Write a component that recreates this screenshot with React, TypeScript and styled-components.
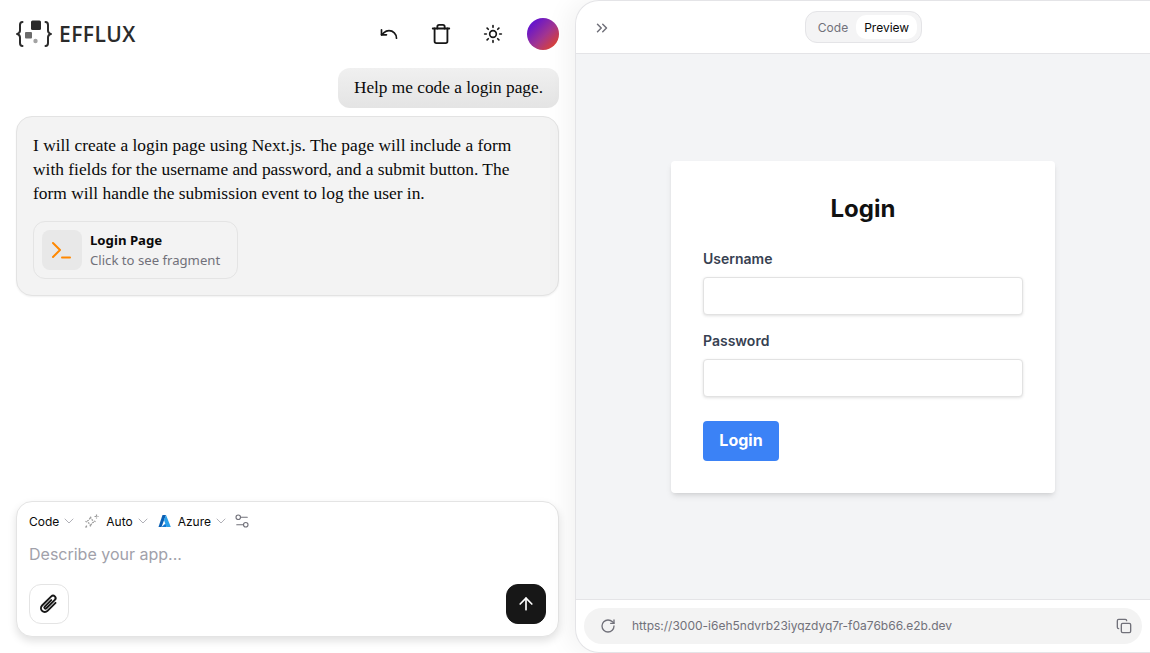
import React from "react";
import styled, { createGlobalStyle } from "styled-components";
import { ArrowUp, ChevronDown, ChevronsRight, Copy, RotateCw, Settings2, Sun, Trash, Undo } from "lucide-react";

const GlobalStyle = createGlobalStyle`
  html, body, #root { margin: 0; height: 100%; }
  body { background: #fff; font-family: Inter, "Liberation Sans", sans-serif; overflow: hidden; }
  * { box-sizing: border-box; }
`;

const Page = styled.div`
  display: flex;
  width: 1150px;
  height: 653px;
  background: #fff;
`;

const ChatColumn = styled.div`
  width: 575px;
  flex: none;
  display: flex;
  flex-direction: column;
  padding: 0 16px 16px;
`;

const TopBar = styled.header`
  height: 68px;
  flex: none;
  display: flex;
  align-items: center;
  justify-content: space-between;
`;

const Brand = styled.div`
  display: flex;
  align-items: center;
  gap: 7px;
`;

const BrandName = styled.span`
  font-family: "Open Sans", sans-serif;
  font-size: 21px;
  font-weight: 600;
  letter-spacing: 0.45px;
  color: #2b2b2b;
`;

const TopActions = styled.div`
  display: flex;
  align-items: center;
`;

const IconSlot = styled.span`
  width: 52px;
  display: flex;
  justify-content: center;
  color: #171717;
`;

const Avatar = styled.div`
  width: 32px;
  height: 32px;
  margin-left: 8px;
  border-radius: 50%;
  background: linear-gradient(135deg, #5b0fd6 10%, #a23590 55%, #e8451f 95%);
`;

const Messages = styled.div`
  flex: 1;
  display: flex;
  flex-direction: column;
  gap: 8px;
`;

const UserBubble = styled.div`
  align-self: flex-end;
  height: 40px;
  padding: 0 16px;
  display: flex;
  align-items: center;
  border-radius: 12px;
  background: linear-gradient(180deg, #f0f0f0, #e4e4e4);
  font-family: "Liberation Serif", serif;
  font-size: 17.3px;
  color: #0a0a0a;
`;

const AssistantBubble = styled.div`
  height: 180px;
  padding: 16px;
  border: 1px solid #e3e3e3;
  border-radius: 16px;
  background: #f3f3f3;
  box-shadow: 0 1px 2px rgba(0, 0, 0, 0.06);
`;

const AssistantText = styled.p`
  margin: 0 0 16px;
  font-family: "Liberation Serif", serif;
  font-size: 17.4px;
  line-height: 24px;
  color: #0a0a0a;
`;

const Fragment = styled.div`
  width: 205px;
  height: 58px;
  display: flex;
  align-items: center;
  gap: 8px;
  padding-left: 8px;
  border: 1px solid #e4e4e4;
  border-radius: 12px;
`;

const FragmentIcon = styled.div`
  width: 40px;
  height: 40px;
  display: flex;
  align-items: center;
  justify-content: center;
  border-radius: 8px;
  background: #e8e8e8;
`;

const FragmentTitle = styled.div`
  font-family: "Noto Sans", sans-serif;
  font-size: 13.2px;
  font-weight: 700;
  line-height: 19px;
  color: #0a0a0a;
`;

const FragmentHint = styled.div`
  font-family: "Noto Sans", sans-serif;
  font-size: 13.15px;
  line-height: 20px;
  color: #71717a;
`;

const Composer = styled.div`
  height: 136px;
  flex: none;
  padding: 10px 12px 12px;
  display: flex;
  flex-direction: column;
  border: 1px solid #e4e4e4;
  border-radius: 16px;
  background: #fff;
  box-shadow: 0 4px 8px rgba(0, 0, 0, 0.12);
`;

const PickerRow = styled.div`
  display: flex;
  align-items: center;
  gap: 7px;
  height: 18px;
  font-size: 12px;
  color: #0a0a0a;
`;

const Picker = styled.span`
  display: inline-flex;
  align-items: center;
  gap: 2px;
`;

const PickerChevron = styled(ChevronDown).attrs({ size: 16, strokeWidth: 1.25, color: "#a1a1aa" })``;

const TuneIcon = styled(Settings2).attrs({ size: 18, strokeWidth: 1.5, color: "#71717a" })`
  margin-left: -3px;
`;

const Placeholder = styled.div`
  margin-top: 12px;
  height: 24px;
  font-size: 16px;
  line-height: 24px;
  color: #a1a1aa;
`;

const ComposerActions = styled.div`
  margin-top: auto;
  display: flex;
  justify-content: space-between;
`;

const SquareButton = styled.button<{ $dark?: boolean }>`
  width: 40px;
  height: 40px;
  padding: 0;
  display: flex;
  align-items: center;
  justify-content: center;
  border-radius: 12px;
  border: 1px solid ${(p) => (p.$dark ? "#171717" : "#e4e4e4")};
  background: ${(p) => (p.$dark ? "#171717" : "#fff")};
  color: ${(p) => (p.$dark ? "#fff" : "#171717")};
`;

const PreviewPanel = styled.section`
  flex: 1;
  display: flex;
  flex-direction: column;
  border: 1px solid #e4e4e7;
  border-right: 0;
  border-radius: 24px 0 0 24px;
  overflow: hidden;
  background: #fff;
  box-shadow: -8px 0 24px rgba(0, 0, 0, 0.05);
`;

const PreviewHeader = styled.div`
  height: 53px;
  flex: none;
  display: grid;
  grid-template-columns: 1fr auto 1fr;
  align-items: start;
  padding: 10px 16px 0 17px;
  border-bottom: 1px solid #e4e4e7;
`;

const Collapse = styled.span`
  display: flex;
  color: #71717a;
  margin-top: 8px;
`;

const Tabs = styled.div`
  height: 32px;
  padding: 3px 4px;
  display: flex;
  border: 1px solid #e4e4e7;
  border-radius: 12px;
  background: #f4f4f5;
`;

const Tab = styled.span<{ $active?: boolean }>`
  display: flex;
  align-items: center;
  padding: 0 8px;
  border-radius: 10px;
  font-size: 12px;
  background: ${(p) => (p.$active ? "#fff" : "transparent")};
  color: ${(p) => (p.$active ? "#0a0a0a" : "#71717a")};
`;

const PreviewBody = styled.div`
  flex: 1;
  display: flex;
  align-items: center;
  justify-content: center;
  background: #f3f4f6;
`;

const LoginCard = styled.form`
  width: 384px;
  height: 332px;
  padding: 32px;
  border-radius: 4px;
  background: #fff;
  box-shadow: 0 4px 6px -1px rgba(0, 0, 0, 0.1), 0 2px 4px -2px rgba(0, 0, 0, 0.1);
`;

const LoginTitle = styled.h1`
  margin: 0 0 24px;
  text-align: center;
  font-family: Inter, sans-serif;
  font-size: 24px;
  line-height: 32px;
  font-weight: 700;
  color: #111;
`;

const Field = styled.div`
  margin-bottom: 16px;
`;

const FieldLabel = styled.label`
  display: block;
  margin-bottom: 8px;
  font-family: Inter, sans-serif;
  font-size: 14px;
  line-height: 20px;
  font-weight: 600;
  color: #374151;
`;

const FieldInput = styled.div`
  height: 38px;
  border: 1px solid #e2e2e2;
  border-radius: 4px;
  background: #fff;
  box-shadow: 0 1px 3px rgba(0, 0, 0, 0.12);
`;

const LoginButton = styled.div`
  width: 76px;
  height: 40px;
  margin-top: 24px;
  padding-bottom: 2px;
  display: flex;
  align-items: center;
  justify-content: center;
  border-radius: 4px;
  background: #3b82f6;
  color: #fff;
  font-family: Inter, sans-serif;
  font-size: 16px;
  font-weight: 700;
`;

const PreviewFooter = styled.div`
  height: 53px;
  flex: none;
  padding: 8px 8px 9px;
  border-top: 1px solid #e4e4e7;
`;

const UrlBar = styled.div`
  height: 36px;
  display: flex;
  align-items: center;
  padding: 0 10px 0 16px;
  border-radius: 18px;
  background: #f3f3f3;
  color: #71717a;
`;

const UrlText = styled.span`
  flex: 1;
  margin: 0 0 2px 16px;
  font-size: 12px;
`;

const LogoMark = () => (
  <svg width="36" height="28" viewBox="0 0 36 28" fill="none">
    <path d="M6.500 2C4.500 2 4 3.500 4 5v5.500c0 1.500-.7 2.700-2.500 3.500C3.300 14.800 4 16 4 17.500V23c0 1.500.5 3 2.500 3" stroke="#2b2b2b" strokeWidth="2" strokeLinecap="round" />
    <path d="M29.500 2c2 0 2.500 1.500 2.500 3v5.500c0 1.500.7 2.700 2.500 3.500-1.800.8-2.500 2-2.500 3.500V23c0 1.500-.5 3-2.500 3" stroke="#2b2b2b" strokeWidth="2" strokeLinecap="round" />
    <rect x="15" y="0.500" width="10" height="9.500" rx="1.500" fill="#2b2b2b" />
    <rect x="9" y="12" width="7" height="6.500" rx="1" fill="#6b6b6b" />
    <circle cx="19.500" cy="21" r="2.200" fill="#a3a3a3" />
  </svg>
);

const PromptIcon = () => (
  <svg width="24" height="24" viewBox="0 0 24 24" fill="none" stroke="#ff8800" strokeWidth="2" strokeLinecap="round" strokeLinejoin="round">
    <path d="M3 5l7 7-7 7" />
    <path d="M12 19.500h8" />
  </svg>
);

const AzureIcon = () => (
  <svg width="13" height="14" viewBox="0 0 13 14">
    <path d="M4.500 1h3.500L3.500 13H.5z" fill="#0a5fb4" />
    <path d="M8 1l4.800 12H8.500L6 6z" fill="#2aa0ea" />
    <path d="M3.500 13l4-3.500L8.500 13z" fill="#0f78d4" />
  </svg>
);

const SparkleIcon = () => (
  <svg width="15" height="15" viewBox="0 0 15 15" fill="none" stroke="#9a9a9a" strokeWidth="1.200" strokeDasharray="2 1">
    <path d="M6.500 2.500c.6 3 2 4.400 5 5-3 .6-4.400 2-5 5-.6-3-2-4.400-5-5 3-.6 4.400-2 5-5z" />
    <path d="M12.500 .5v4M10.500 2.500h4" />
    <path d="M2.500 11.500v3M1 13h3" />
  </svg>
);

const ClipIcon = () => (
  <svg width="26" height="26" viewBox="0 0 24 24" fill="none" stroke="currentColor" strokeWidth="1.800" strokeLinecap="round" strokeLinejoin="round">
    <g transform="rotate(45 12 12)">
      <path d="M15.500 7v10.500a3.500 3.500 0 0 1-7 0V5.500a2.300 2.300 0 0 1 4.600 0V16.500a1.100 1.100 0 0 1-2.200 0V8" />
    </g>
  </svg>
);

export default function App() {
  return (
    <>
      <GlobalStyle />
      <Page>
        <ChatColumn>
          <TopBar>
            <Brand>
              <LogoMark />
              <BrandName>EFFLUX</BrandName>
            </Brand>
            <TopActions>
              <IconSlot><Undo size={20} /></IconSlot>
              <IconSlot><Trash size={22} /></IconSlot>
              <IconSlot><Sun size={20} /></IconSlot>
              <Avatar />
            </TopActions>
          </TopBar>
          <Messages>
            <UserBubble>Help me code a login page.</UserBubble>
            <AssistantBubble>
              <AssistantText>
                I will create a login page using Next.js. The page will include a form with fields for the username and password, and a submit button. The form will handle the submission event to log the user in.
              </AssistantText>
              <Fragment>
                <FragmentIcon><PromptIcon /></FragmentIcon>
                <div>
                  <FragmentTitle>Login Page</FragmentTitle>
                  <FragmentHint>Click to see fragment</FragmentHint>
                </div>
              </Fragment>
            </AssistantBubble>
          </Messages>
          <Composer>
            <PickerRow>
              <Picker>Code <PickerChevron /></Picker>
              <SparkleIcon />
              <Picker>Auto <PickerChevron /></Picker>
              <AzureIcon />
              <Picker>Azure <PickerChevron /></Picker>
              <TuneIcon />
            </PickerRow>
            <Placeholder>Describe your app...</Placeholder>
            <ComposerActions>
              <SquareButton type="button"><ClipIcon /></SquareButton>
              <SquareButton type="button" $dark><ArrowUp size={20} /></SquareButton>
            </ComposerActions>
          </Composer>
        </ChatColumn>
        <PreviewPanel>
          <PreviewHeader>
            <Collapse><ChevronsRight size={18} /></Collapse>
            <Tabs>
              <Tab>Code</Tab>
              <Tab $active>Preview</Tab>
            </Tabs>
          </PreviewHeader>
          <PreviewBody>
            <LoginCard>
              <LoginTitle>Login</LoginTitle>
              <Field>
                <FieldLabel>Username</FieldLabel>
                <FieldInput />
              </Field>
              <Field>
                <FieldLabel>Password</FieldLabel>
                <FieldInput />
              </Field>
              <LoginButton>Login</LoginButton>
            </LoginCard>
          </PreviewBody>
          <PreviewFooter>
            <UrlBar>
              <RotateCw size={16} />
              <UrlText>https://3000-i6eh5ndvrb23iyqzdyq7r-f0a76b66.e2b.dev</UrlText>
              <Copy size={16} />
            </UrlBar>
          </PreviewFooter>
        </PreviewPanel>
      </Page>
    </>
  );
}
